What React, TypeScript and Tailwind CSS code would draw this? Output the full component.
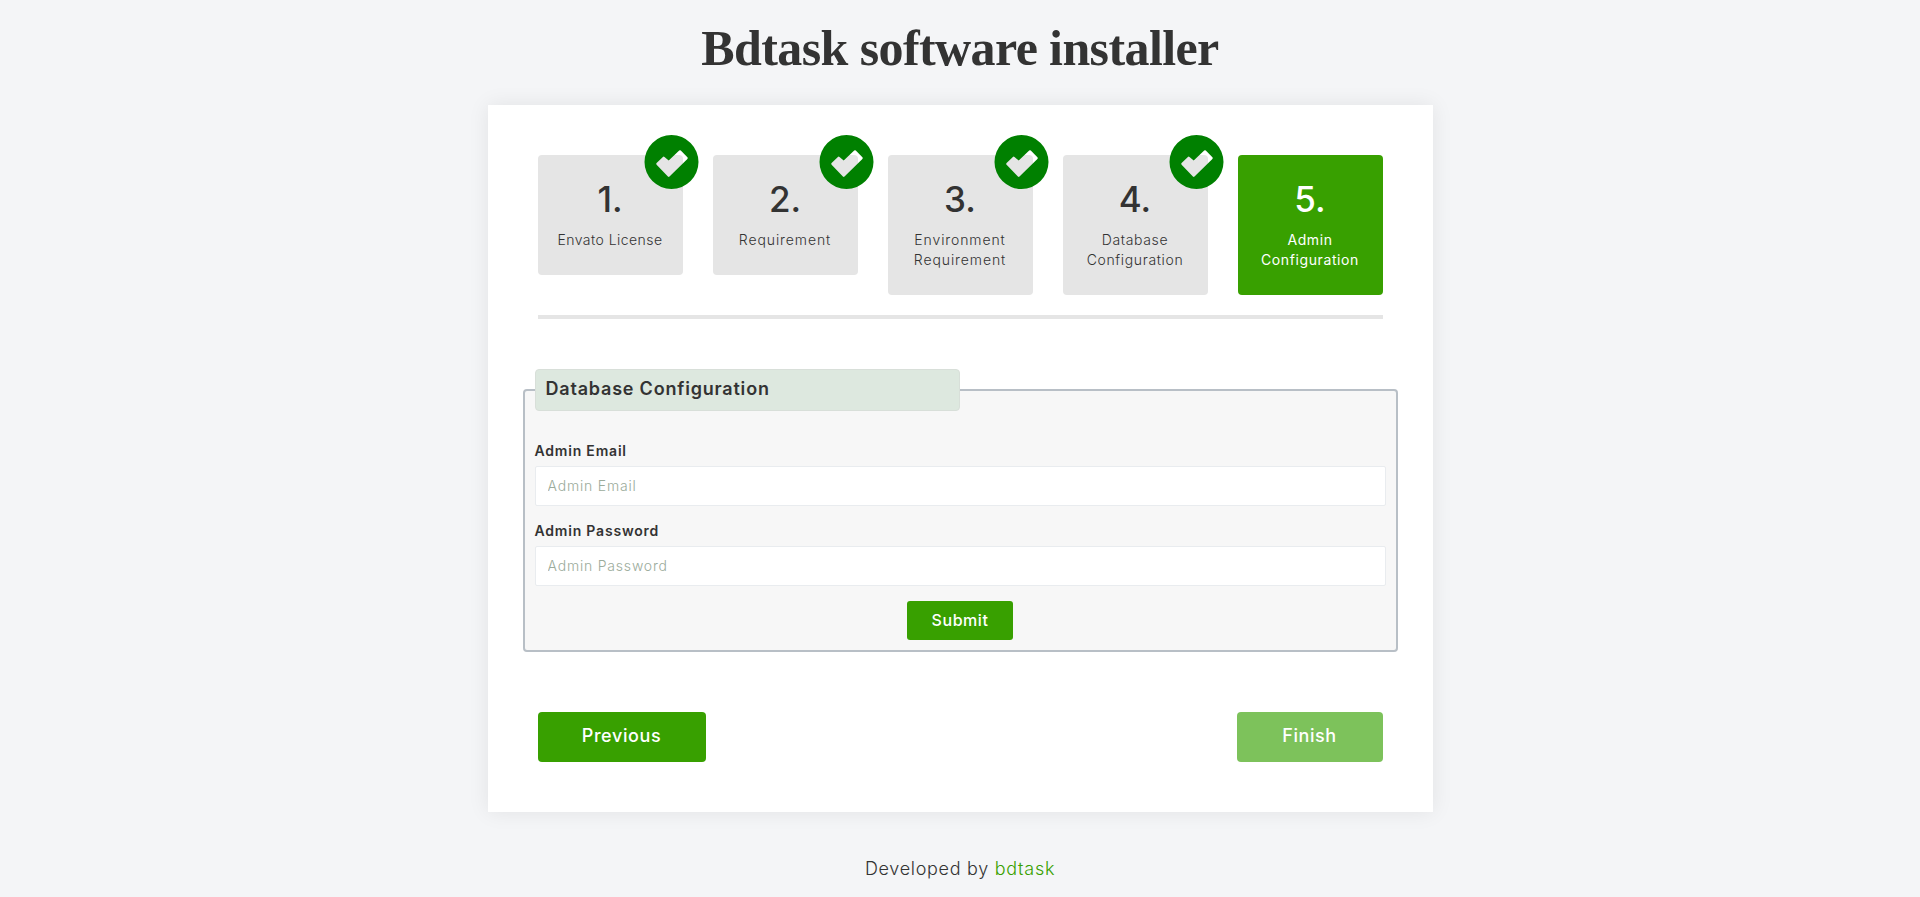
import React from "react";

type Step = { title: string; done: boolean; tracking: string };

const steps: Step[] = [
  { title: "Envato License", done: true, tracking: "tracking-[0.45px]" },
  { title: "Requirement", done: true, tracking: "tracking-[0.9px]" },
  { title: "Environment Requirement", done: true, tracking: "tracking-[0.9px]" },
  { title: "Database Configuration", done: true, tracking: "tracking-[0.65px]" },
  { title: "Admin Configuration", done: false, tracking: "tracking-[0.6px]" },
];

function CheckBadge() {
  return (
    <svg className="absolute -top-5 -right-4 size-[55px]" viewBox="0 0 55 55" aria-hidden="true">
      <path
        fill="#008000"
        fillRule="evenodd"
        d="M27.5 0a27 27 0 1 0 0 54a27 27 0 1 0 0-54ZM12.6 28.1L18.9 22Q19.7 21.2 20.5 22L24.7 25.6L35.2 15.6Q36 14.9 36.8 15.6L43.4 22.3Q44.2 23.1 43.4 23.9L25.5 41.5Q24.7 42.3 23.9 41.5L12.6 29.7Q11.8 28.9 12.6 28.1Z"
      />
    </svg>
  );
}

function StepCard({ step, index }: { step: Step; index: number }) {
  const tone = step.done ? "bg-[#e5e5e5] text-[#333]" : "bg-[#38a000] text-white";
  return (
    <li className={`relative w-[145px] rounded px-3 pt-6 pb-[25px] text-center ${tone}`}>
      <div className="h-10 text-[35px] leading-10 font-medium">{index + 1}.</div>
      <div
        className={`mt-[11px] text-[14px] leading-5 ${step.tracking} ${step.done ? "font-light" : "font-normal"}`}
      >
        {step.title}
      </div>
      {step.done && <CheckBadge />}
    </li>
  );
}

function Field({ label, type }: { label: string; type: string }) {
  return (
    <label className="mb-[15px] block">
      <span className="mb-[5px] block text-[14px] leading-5 font-semibold tracking-[0.8px]">{label}</span>
      <input
        type={type}
        placeholder={label}
        className="block h-10 w-full rounded-[2px] border border-[#e9ecef] bg-white px-3 pb-0.5 text-[14px] font-light tracking-[0.8px] outline-none placeholder:text-[#9bab9b]"
      />
    </label>
  );
}

export default function App() {
  return (
    <div className="flex h-[897px] flex-col items-center overflow-hidden bg-[#f4f5f7] font-['Inter','Liberation_Sans',sans-serif] text-[#333]">
      <h1 className="mt-5 h-[85px] font-['Liberation_Serif',serif] text-[50px] leading-[57px] font-bold tracking-[-0.6px] whitespace-nowrap">
        Bdtask software installer
      </h1>
      <main className="h-[707px] w-[945px] shrink-0 bg-white px-[35px] pt-[50px] shadow-[0_0_20px_rgba(0,0,0,0.08)]">
        <ol className="mx-[15px] flex h-[164px] items-start justify-between border-b-4 border-[#e5e5e5]">
          {steps.map((step, i) => (
            <StepCard key={step.title} step={step} index={i} />
          ))}
        </ol>
        <fieldset className="mt-[50px] h-[283px] rounded border-2 border-[#b8bfc6] bg-[#f7f7f7] px-[10px]">
          <legend className="h-[42px] w-[425px] rounded border border-[#d8dfd9] bg-[#dde8df] px-[10px] text-[18px] leading-[38px] font-semibold tracking-[0.8px]">
            Database Configuration
          </legend>
          <div className="pt-[30px]">
            <Field label="Admin Email" type="email" />
            <Field label="Admin Password" type="password" />
            <button className="mx-auto block h-[39px] w-[106px] rounded-[3px] bg-[#38a000] pb-0.5 text-[16px] font-medium tracking-[0.55px] text-white">
              Submit
            </button>
          </div>
        </fieldset>
        <div className="mx-[15px] mt-[60px] flex justify-between text-[18px] font-medium tracking-[0.6px] text-white">
          <button className="h-[50px] w-[168px] rounded bg-[#38a000] pb-[3px]">Previous</button>
          <button className="h-[50px] w-[146px] rounded bg-[#7dc25b] pb-[3px]">Finish</button>
        </div>
      </main>
      <footer className="mt-[44px] text-[18px] leading-[26px] font-light tracking-[0.7px]">
        Developed by <a className="text-[#38a000]">bdtask</a>
      </footer>
    </div>
  );
}
